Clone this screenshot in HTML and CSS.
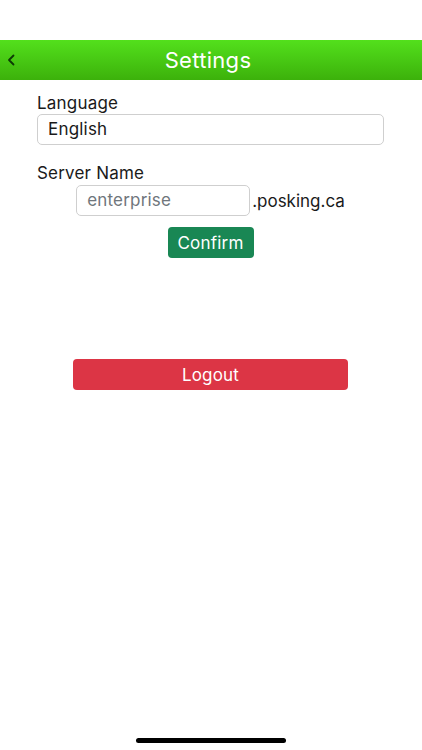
FILE: index.html
```html
<!DOCTYPE html>
<html>
<head>
<meta charset="utf-8">
<link rel="stylesheet" href="styles.css">
</head>
<body>
<div class="screen">
  <div class="statusbar"></div>
  <header class="navbar">
    <span class="back">
      <svg width="8" height="12" viewBox="0 0 8 12"><path d="M6.5 1.5 L2 6 L6.5 10.5" fill="none" stroke="#0d3a05" stroke-width="1.8" stroke-linecap="round" stroke-linejoin="round"/></svg>
    </span>
    <h1 class="title">Settings</h1>
  </header>
  <main class="content">
    <label class="label">Language</label>
    <div class="field">English</div>
    <label class="label label-server">Server Name</label>
    <div class="server-row">
      <div class="field field-server placeholder">enterprise</div>
      <span class="domain">.posking.ca</span>
    </div>
    <div class="center">
      <button class="btn btn-confirm">Confirm</button>
    </div>
    <div class="center logout-wrap">
      <button class="btn btn-logout">Logout</button>
    </div>
  </main>
  <div class="home-indicator"></div>
</div>
</body>
</html>
```
FILE: styles.css
```css
* { box-sizing: border-box; }
html, body { margin: 0; padding: 0; background: #fff; }
body { font-family: Inter, "Liberation Sans", Arial, sans-serif; color: #1a1a1a; letter-spacing: 0.2px; }
.screen { width: 422px; height: 750px; position: relative; overflow: hidden; }
.statusbar { height: 40px; }
.navbar {
  height: 40px;
  background: linear-gradient(#53e01c, #3cb10b);
  display: flex; align-items: center; justify-content: center;
  padding-right: 6px;
  position: relative;
}
.back { position: absolute; left: 7px; top: 14px; display: flex; }
.title { margin: 0; font-weight: normal; font-size: 22px; color: #fff; letter-spacing: 0.3px; }
.content { padding: 0 38px 0 37px; display: flex; flex-direction: column; }
.label { font-size: 17px; color: #1a1a1a; margin-top: 13px; height: 21px; line-height: 21px; }
.label-server { margin-top: 18px; }
.field {
  height: 31px; border: 1px solid #cfcfcf; border-radius: 5px;
  font-size: 17px; line-height: 29px; padding-left: 10px; color: #1a1a1a;
}
.server-row { display: flex; justify-content: center; align-items: center; margin-top: 1px; }
.field-server { width: 174px; }
.placeholder { color: #6f767c; }
.domain { font-size: 17px; margin-left: 2px; letter-spacing: 0; }
.center { display: flex; justify-content: center; }
.btn {
  border: none; color: #fff; font-family: inherit; font-size: 17px; letter-spacing: 0.2px;
  border-radius: 4px; padding: 0; cursor: pointer;
}
.btn-confirm { margin-top: 11px; width: 86px; height: 31px; background: #198754; }
.logout-wrap { margin-top: 101px; }
.btn-logout { width: 275px; height: 31px; background: #dc3545; }
.home-indicator {
  position: absolute; left: 136px; bottom: 7px; width: 150px; height: 5px;
  border-radius: 3px; background: #000;
}
```
